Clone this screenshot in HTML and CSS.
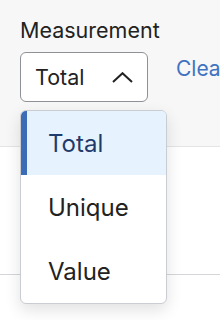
FILE: index.html
```html
<!DOCTYPE html>
<html lang="en">
<head>
  <meta charset="UTF-8">
  <meta name="viewport" content="width=device-width, initial-scale=1">
  <title>Measurement filter</title>
  <link rel="stylesheet" href="styles.css">
</head>
<body>
  <div class="page">
    <!-- Filter bar -->
    <div class="filters">
      <div class="field-label">Measurement</div>
      <div class="field-row">
        <div class="select-wrap">
          <button class="select" type="button">
            <span>Total</span>
            <svg class="chevron" width="21" height="11" viewBox="0 0 21 11" aria-hidden="true">
              <polyline points="1,10 10.5,1.2 20,10" fill="none" stroke="#222" stroke-width="2"/>
            </svg>
          </button>

          <!-- Open menu -->
          <ul class="menu">
            <li class="menu-item selected">Total</li>
            <li class="menu-item">Unique</li>
            <li class="menu-item">Value</li>
          </ul>
        </div>
        <a class="clear-link" href="#">Clear</a>
      </div>
    </div>

    <!-- Table area under the filters -->
    <div class="table-area"></div>
    <div class="table-rest"></div>
  </div>
</body>
</html>
```

FILE: styles.css
```css
/* Filter bar with open dropdown */
html, body {
  height: 100%;
}
body {
  font-family: Inter, "Noto Sans", sans-serif;
  background-color: #fff;
  color: #222;
  margin: 0;
}
.page {
  display: flex;
  flex-direction: column;
  height: 320px;
  overflow: hidden;
  white-space: nowrap;
}
.filters {
  position: relative;
  z-index: 2;
  box-sizing: border-box;
  flex: none;
  height: 147px;
  padding: 18px 20px 0;
  background-color: #f7f7f8;
  border-bottom: 1px solid #e3e4e6;
}
.field-label {
  font-size: 21.5px;
  line-height: 24px;
  margin-bottom: 10px;
}
.field-row {
  display: flex;
  align-items: flex-start;
  gap: 28px;
}
.select-wrap {
  position: relative;
}
.select {
  box-sizing: border-box;
  width: 128px;
  height: 50px;
  padding: 0 14px;
  display: flex;
  align-items: center;
  justify-content: space-between;
  background: #fff;
  border: 1px solid #8e9196;
  border-radius: 6px;
  font-family: inherit;
  font-size: 21.5px;
  color: #222;
  cursor: pointer;
}
.chevron {
  display: block;
}
.clear-link {
  margin-top: 5px;
  font-size: 21px;
  line-height: 24px;
  color: #3f73c1;
  text-decoration: none;
}
.menu {
  position: absolute;
  top: 58px;
  left: 0;
  width: 147px;
  box-sizing: border-box;
  margin: 0;
  padding: 0;
  list-style: none;
  background: #fff;
  border: 1px solid #c9ccd1;
  border-radius: 6px;
  overflow: hidden;
  box-shadow: 0 6px 16px rgba(0,0,0,0.12);
}
.menu-item {
  height: 64px;
  display: flex;
  align-items: center;
  padding-left: 27px;
  font-size: 24px;
  color: #222;
}
.menu-item.selected {
  padding-left: 21px;
  border-left: 6px solid #3b6cb5;
  background-color: #e6f3fe;
  color: #1f3a6b;
}
.table-area {
  flex: none;
  height: 127px;
  border-bottom: 1px solid #d4d6da;
}
.table-rest {
  flex: 1;
  background-color: #fff;
}
```
